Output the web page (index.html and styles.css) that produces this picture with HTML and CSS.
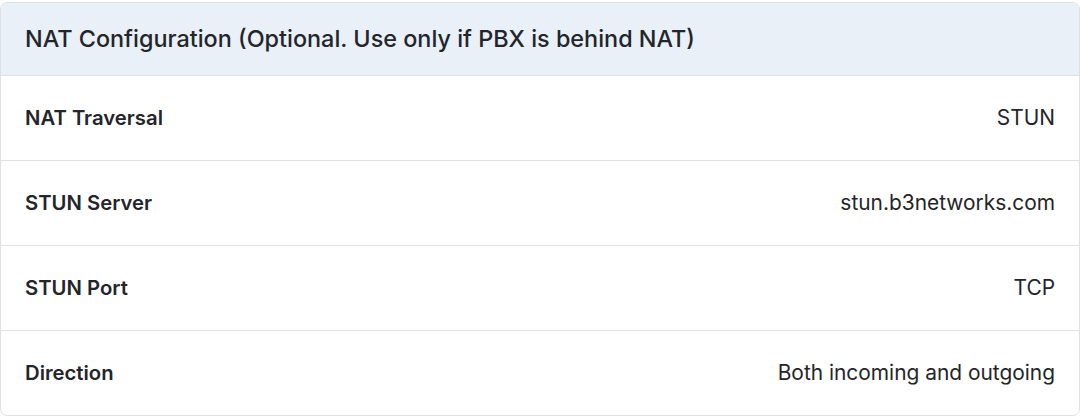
FILE: index.html
```html
<!DOCTYPE html>
<html>
<head>
<meta charset="utf-8">
<link rel="stylesheet" href="styles.css">
</head>
<body>
<div class="card">
  <div class="card-header">NAT Configuration (Optional. Use only if PBX is behind NAT)</div>
  <div class="row"><span class="label">NAT Traversal</span><span class="value">STUN</span></div>
  <div class="row"><span class="label">STUN Server</span><span class="value">stun.b3networks.com</span></div>
  <div class="row"><span class="label">STUN Port</span><span class="value">TCP</span></div>
  <div class="row"><span class="label">Direction</span><span class="value">Both incoming and outgoing</span></div>
</div>
</body>
</html>
```
FILE: styles.css
```css
html, body {
  margin: 0;
  padding: 0;
  background: #ffffff;
}
body {
  padding-top: 2px;
  font-family: Inter, "Noto Sans", sans-serif;
  color: #24252a;
}
.card {
  border: 1px solid #dfe1e4;
  border-radius: 7px;
  overflow: hidden;
  height: 414px;
  box-sizing: border-box;
  display: flex;
  flex-direction: column;
}
.card-header {
  background: #e9f0f8;
  height: 73px;
  flex: none;
  box-sizing: border-box;
  display: flex;
  align-items: center;
  padding: 0 24px 2px;
  font-size: 23.4px;
  font-weight: 500;
  border-bottom: 1px solid #dfe1e4;
}
.row {
  height: 85px;
  flex: none;
  box-sizing: border-box;
  display: flex;
  align-items: center;
  justify-content: space-between;
  padding: 0 24px 2px;
  border-bottom: 1px solid #dfe1e4;
}
.row:last-child {
  border-bottom: none;
  flex: 1;
}
.label {
  font-size: 20.3px;
  font-weight: 600;
}
.value {
  font-size: 20.9px;
  font-weight: 400;
}
```
